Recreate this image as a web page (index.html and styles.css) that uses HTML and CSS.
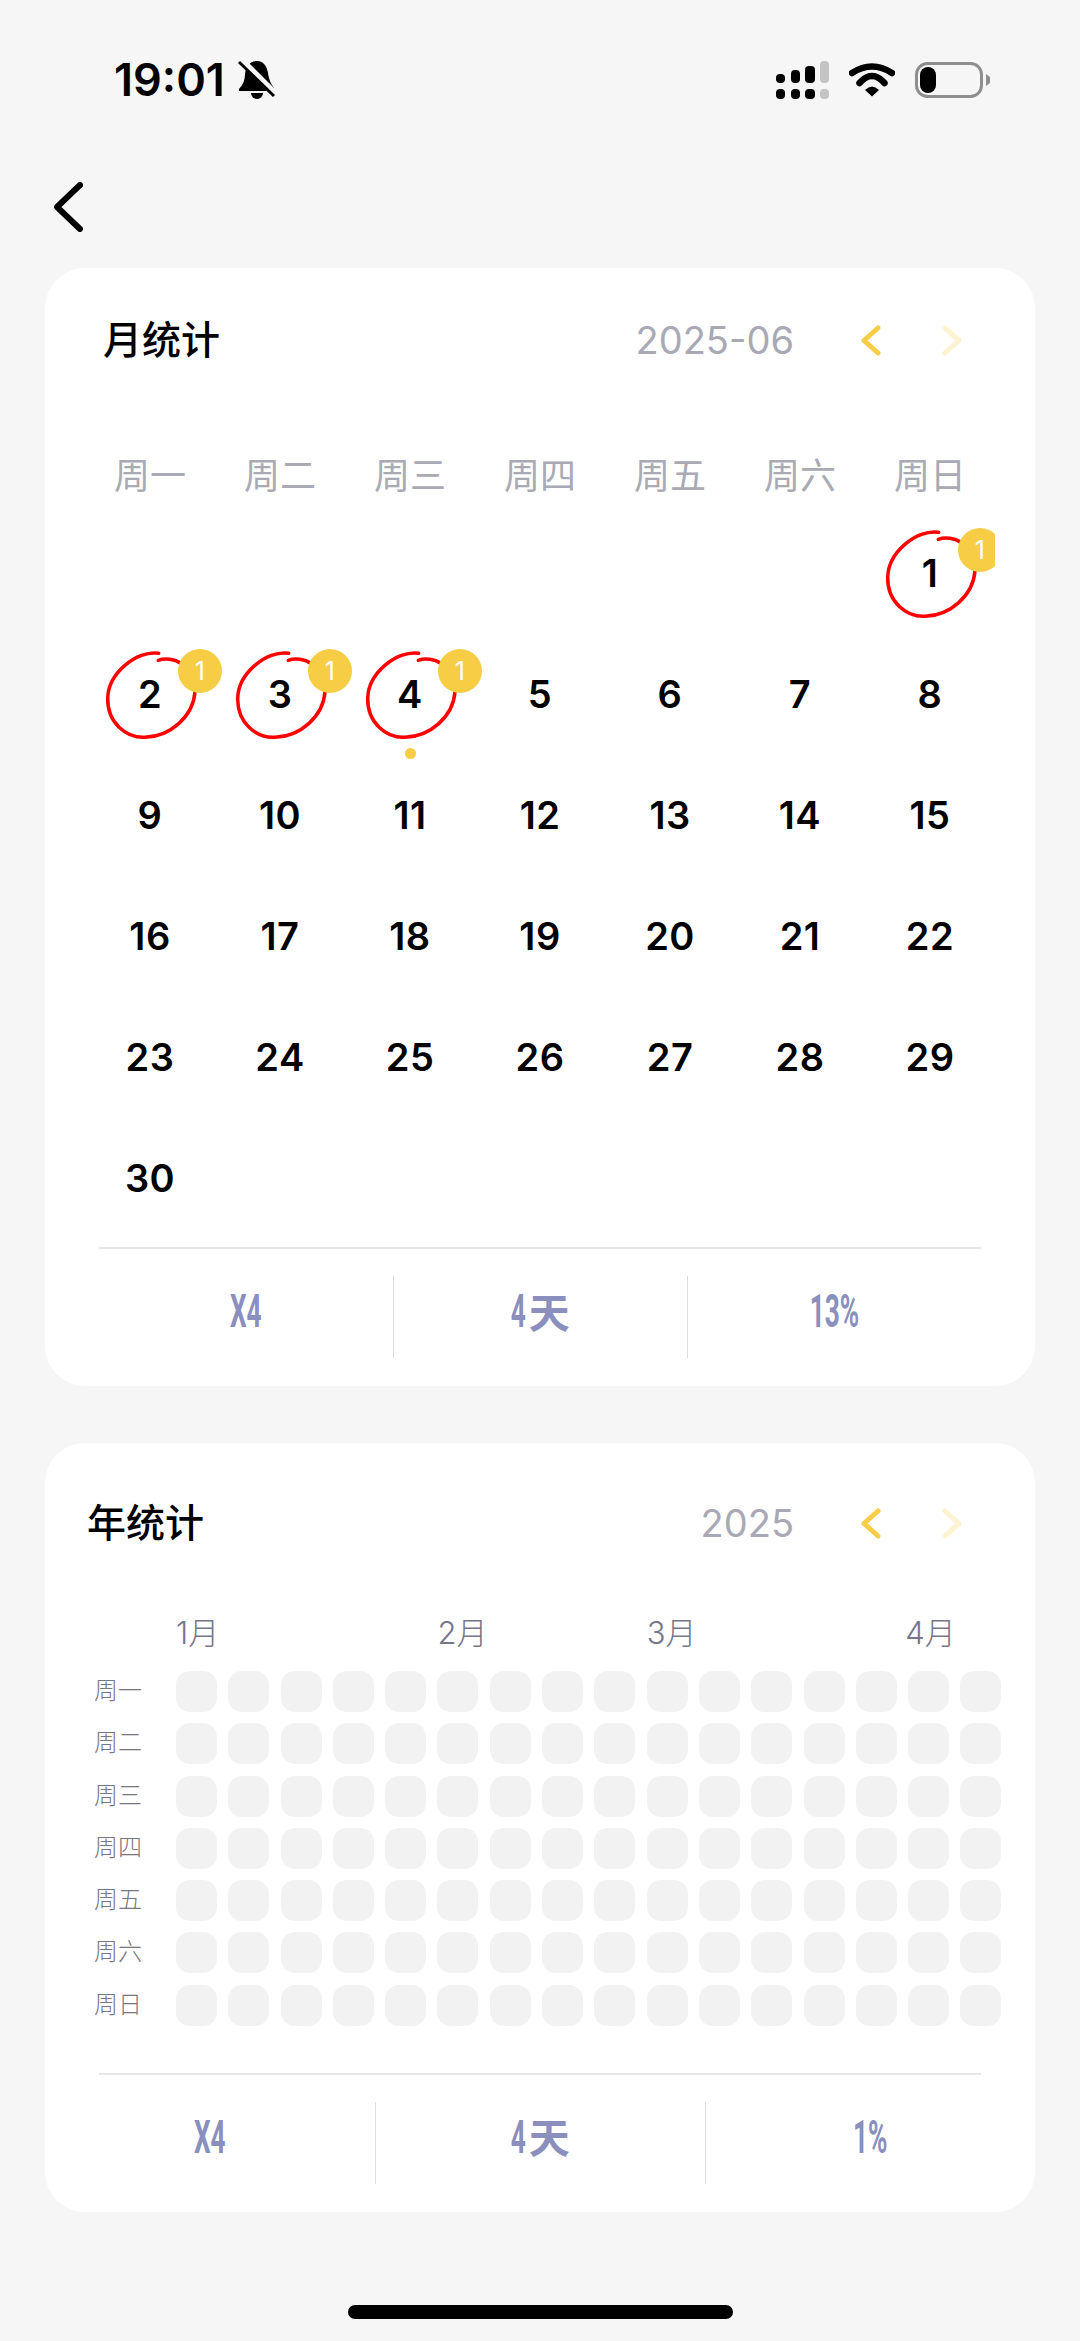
FILE: index.html
```html
<!DOCTYPE html>
<html lang="zh-CN">
<head>
    <meta charset="UTF-8">
    <meta name="viewport" content="width=device-width, initial-scale=1.0">
    <title>统计</title>
    <link rel="stylesheet" href="styles.css">
</head>
<body>
    <div class="status-bar">
        <div class="status-left">
            <span class="status-time">19:01</span>
            <svg class="icon-bell" viewBox="0 0 38 40" width="38" height="40">
                <path d="M19 1C26 1 29 7 30 13C31 20 33 24 36 28V31H1V29C5 25 7 20 7 14C8 7 12 1 19 1Z" fill="#000"/>
                <path d="M13 33A6 6 0 0 0 25 33Z" fill="#000"/>
                <path d="M3 0L38 35" stroke="#f6f6f6" stroke-width="7"/>
                <path d="M1 2L36 36" stroke="#000" stroke-width="3"/>
            </svg>
        </div>
        <div class="status-right">
            <svg viewBox="0 0 53 38" width="53" height="38">
                <rect x="0" y="13" width="9" height="9" rx="4" fill="#000"/>
                <rect x="15" y="9" width="9" height="13" rx="4" fill="#000"/>
                <rect x="29" y="5" width="10" height="17" rx="4" fill="#000"/>
                <rect x="44" y="0" width="9" height="22" rx="4" fill="#c4c4c4"/>
                <rect x="0" y="28" width="9" height="10" rx="4" fill="#000"/>
                <rect x="15" y="28" width="9" height="10" rx="4" fill="#000"/>
                <rect x="29" y="28" width="10" height="10" rx="4" fill="#000"/>
                <rect x="44" y="28" width="9" height="10" rx="4" fill="#c4c4c4"/>
            </svg>
            <svg viewBox="0 0 46 34" width="46" height="34">
                <path d="M3 10Q23 -3 43 10" fill="none" stroke="#000" stroke-width="6.5" stroke-linecap="round"/>
                <path d="M10.5 20Q23 6 35.5 20" fill="none" stroke="#000" stroke-width="6.5" stroke-linecap="round"/>
                <path d="M16 27Q23 20 30 27L23 33.5Z" fill="#000"/>
            </svg>
            <svg class="icon-battery" viewBox="0 0 75 36" width="75" height="36">
                <rect x="1.5" y="1.5" width="65" height="33" rx="11" fill="none" stroke="#8e8e8e" stroke-width="3"/>
                <rect x="5" y="5" width="16" height="26" rx="8" fill="#000"/>
                <path d="M71 12L75 15V21L71 24Z" fill="#8e8e8e"/>
            </svg>
        </div>
    </div>

    <div class="back">
        <svg viewBox="0 0 29 50" width="29" height="50">
            <polyline points="26,3 3,25 26,47" fill="none" stroke="#000" stroke-width="6" stroke-linecap="round" stroke-linejoin="round"/>
        </svg>
    </div>

    <div class="card month-card">
        <div class="card-head">
            <span class="card-title">月统计</span>
            <span class="card-date">2025-06</span>
            <svg class="chev" viewBox="0 0 21 31" width="21" height="31"><polyline points="18,3 4,15.5 18,28"/></svg>
            <svg class="chev chev-next" viewBox="0 0 21 31" width="21" height="31"><polyline points="3,3 17,15.5 3,28"/></svg>
        </div>
        <div class="weekdays">
            <span>周一</span><span>周二</span><span>周三</span><span>周四</span><span>周五</span><span>周六</span><span>周日</span>
        </div>
        <div class="days">
            <div class="day first">
                <svg class="loop" viewBox="0 0 130 121"><path d="M73.7 20.3C51.7 17 23.3 40.3 22.7 65.3C22.3 90.3 41.7 105.3 60 104.3C85 103.7 108.3 83.7 110 58.7"/><path d="M73.3 27.3C80 24.7 90 26 96.7 31"/></svg>
                1<span class="badge">1</span>
            </div>
            <div class="day">
                <svg class="loop" viewBox="0 0 130 121"><path d="M73.7 20.3C51.7 17 23.3 40.3 22.7 65.3C22.3 90.3 41.7 105.3 60 104.3C85 103.7 108.3 83.7 110 58.7"/><path d="M73.3 27.3C80 24.7 90 26 96.7 31"/></svg>
                2<span class="badge">1</span>
            </div>
            <div class="day">
                <svg class="loop" viewBox="0 0 130 121"><path d="M73.7 20.3C51.7 17 23.3 40.3 22.7 65.3C22.3 90.3 41.7 105.3 60 104.3C85 103.7 108.3 83.7 110 58.7"/><path d="M73.3 27.3C80 24.7 90 26 96.7 31"/></svg>
                3<span class="badge">1</span>
            </div>
            <div class="day">
                <svg class="loop" viewBox="0 0 130 121"><path d="M73.7 20.3C51.7 17 23.3 40.3 22.7 65.3C22.3 90.3 41.7 105.3 60 104.3C85 103.7 108.3 83.7 110 58.7"/><path d="M73.3 27.3C80 24.7 90 26 96.7 31"/></svg>
                4<span class="badge">1</span><span class="today-dot"></span>
            </div>
            <div class="day">5</div><div class="day">6</div><div class="day">7</div><div class="day">8</div>
            <div class="day">9</div><div class="day">10</div><div class="day">11</div><div class="day">12</div><div class="day">13</div><div class="day">14</div><div class="day">15</div>
            <div class="day">16</div><div class="day">17</div><div class="day">18</div><div class="day">19</div><div class="day">20</div><div class="day">21</div><div class="day">22</div>
            <div class="day">23</div><div class="day">24</div><div class="day">25</div><div class="day">26</div><div class="day">27</div><div class="day">28</div><div class="day">29</div>
            <div class="day">30</div>
        </div>
        <div class="rule"></div>
        <div class="stats month-stats">
            <div class="stat"><span class="cond">X4</span></div>
            <div class="stat"><span class="cond cond-tight">4</span><span class="stat-cjk">天</span></div>
            <div class="stat"><span class="cond">13%</span></div>
        </div>
    </div>

    <div class="card year-card">
        <div class="card-head">
            <span class="card-title">年统计</span>
            <span class="card-date">2025</span>
            <svg class="chev" viewBox="0 0 21 31" width="21" height="31"><polyline points="18,3 4,15.5 18,28"/></svg>
            <svg class="chev chev-next" viewBox="0 0 21 31" width="21" height="31"><polyline points="3,3 17,15.5 3,28"/></svg>
        </div>
        <div class="heat-months">
            <span class="m-jan">1月</span><span class="m-feb">2月</span><span class="m-mar">3月</span><span class="m-apr">4月</span>
        </div>
        <div class="heat">
            <span class="heat-label">周一</span><i></i><i></i><i></i><i></i><i></i><i></i><i></i><i></i><i></i><i></i><i></i><i></i><i></i><i></i><i></i><i></i>
            <span class="heat-label">周二</span><i></i><i></i><i></i><i></i><i></i><i></i><i></i><i></i><i></i><i></i><i></i><i></i><i></i><i></i><i></i><i></i>
            <span class="heat-label">周三</span><i></i><i></i><i></i><i></i><i></i><i></i><i></i><i></i><i></i><i></i><i></i><i></i><i></i><i></i><i></i><i></i>
            <span class="heat-label">周四</span><i></i><i></i><i></i><i></i><i></i><i></i><i></i><i></i><i></i><i></i><i></i><i></i><i></i><i></i><i></i><i></i>
            <span class="heat-label">周五</span><i></i><i></i><i></i><i></i><i></i><i></i><i></i><i></i><i></i><i></i><i></i><i></i><i></i><i></i><i></i><i></i>
            <span class="heat-label">周六</span><i></i><i></i><i></i><i></i><i></i><i></i><i></i><i></i><i></i><i></i><i></i><i></i><i></i><i></i><i></i><i></i>
            <span class="heat-label">周日</span><i></i><i></i><i></i><i></i><i></i><i></i><i></i><i></i><i></i><i></i><i></i><i></i><i></i><i></i><i></i><i></i>
        </div>
        <div class="rule year-rule"></div>
        <div class="stats year-stats">
            <div class="stat"><span class="cond">X4</span></div>
            <div class="stat"><span class="cond cond-tight">4</span><span class="stat-cjk">天</span></div>
            <div class="stat"><span class="cond">1%</span></div>
        </div>
    </div>

    <div class="home-bar"></div>
</body>
</html>
```

FILE: styles.css
```css
html, body {
    margin: 0;
    padding: 0;
}
body {
    width: 1080px;
    height: 2341px;
    overflow: hidden;
    position: relative;
    background: #f6f6f6;
    font-family: Inter, "Noto Sans CJK SC", sans-serif;
    color: #000;
}

/* status bar */
.status-bar {
    display: flex;
    justify-content: space-between;
    align-items: center;
    height: 44px;
    padding: 58px 90px 0 114px;
}
.status-left {
    display: flex;
    align-items: center;
    gap: 13px;
}
.status-time {
    font-size: 45px;
    font-weight: 600;
    line-height: 44px;
}
.status-right {
    display: flex;
    align-items: center;
    gap: 20px;
}
.status-right svg, .icon-bell {
    display: block;
}

.back {
    height: 50px;
    padding: 80px 0 36px 54px;
}
.back svg {
    display: block;
}

/* cards */
.card {
    margin: 0 45px;
    background: #fff;
    border-radius: 40px;
    padding-bottom: 28px;
}
.year-card {
    margin-top: 57px;
}
.card-head {
    display: flex;
    align-items: center;
    height: 50px;
    padding-right: 72px;
}
.month-card .card-head {
    padding-top: 47px;
    padding-left: 58px;
}
.year-card .card-head {
    padding-top: 55px;
    padding-left: 42px;
}
.card-title {
    padding-bottom: 6px;
    font-size: 39px;
    font-weight: 500;
}
.card-date {
    margin-left: auto;
    margin-right: 66px;
    padding-bottom: 1px;
    font-size: 38px;
    color: #a8a9b5;
}
.chev {
    display: block;
    fill: none;
    stroke: #f7cd46;
    stroke-width: 5;
    stroke-linecap: round;
    stroke-linejoin: round;
}
.chev-next {
    margin-left: 61px;
    stroke: #fdf3d0;
}

/* month calendar */
.weekdays {
    display: grid;
    grid-template-columns: repeat(7, 130px);
    margin: 75px 40px 0;
    height: 72px;
    align-items: center;
    justify-items: center;
    font-size: 36px;
    color: #a9aab3;
}
.weekdays span {
    padding-bottom: 6px;
}
.days {
    display: grid;
    grid-template-columns: repeat(7, 130px);
    grid-auto-rows: 121px;
    margin: 0 40px;
    overflow: hidden;
}
.day {
    position: relative;
    display: flex;
    align-items: center;
    justify-content: center;
    font-size: 38px;
    font-weight: 600;
    letter-spacing: 0.5px;
}
.first {
    grid-column-start: 7;
}
.loop {
    position: absolute;
    top: 0;
    left: 0;
    width: 130px;
    height: 121px;
    fill: none;
    stroke: #f00;
    stroke-width: 3.5;
    stroke-linecap: round;
}
.badge {
    position: absolute;
    top: 16px;
    left: 93px;
    width: 44px;
    height: 44px;
    border-radius: 50%;
    background: #f6cd45;
    color: #fff;
    font-size: 25px;
    font-weight: 400;
    line-height: 44px;
    text-align: center;
}
.today-dot {
    position: absolute;
    top: 115px;
    left: 60px;
    width: 11px;
    height: 11px;
    border-radius: 50%;
    background: #f6cd45;
}

/* summary row */
.rule {
    height: 2px;
    margin: 9px 54px 0;
    background: #e6e6e6;
}
.stats {
    display: grid;
    grid-template-columns: repeat(3, 1fr);
    margin-top: 27px;
}
.month-stats {
    margin-left: 54px;
    margin-right: 54px;
}
.stat {
    display: flex;
    align-items: center;
    justify-content: center;
    height: 70px;
    padding-bottom: 12px;
    color: #8a8fbd;
}
.stat + .stat {
    border-left: 1px solid #dcdcdc;
}
.cond {
    display: inline-block;
    font-family: Roboto, sans-serif;
    font-size: 46px;
    font-weight: 700;
    transform: scaleX(0.57);
}
.cond-tight {
    margin: 0 -3px 0 -6px;
}
.stat-cjk {
    padding-bottom: 3px;
    font-size: 41px;
    font-weight: 700;
}

/* year heat map */
.heat-months, .heat {
    display: grid;
    grid-template-columns: 70.7px repeat(16, 41px);
    column-gap: 11.3px;
    padding-left: 49px;
}
.heat-months {
    margin-top: 60px;
    height: 40px;
    align-items: center;
    font-size: 31px;
    font-weight: 300;
    color: #75768a;
    white-space: nowrap;
}
.heat-months span {
    padding-bottom: 8px;
}
.m-jan { grid-column: 2 / span 3; }
.m-feb { grid-column: 7 / span 3; }
.m-mar { grid-column: 11 / span 3; }
.m-apr { grid-column: 16 / span 2; margin-left: -3px; }
.heat {
    grid-auto-rows: 41px;
    row-gap: 11.3px;
    margin-top: 23px;
    align-items: center;
}
.heat i {
    display: block;
    height: 41px;
    border-radius: 14px;
    background: #f2f2f2;
}
.heat-label {
    padding-bottom: 6px;
    font-size: 24px;
    font-weight: 300;
    color: #77777f;
    white-space: nowrap;
}
.year-rule {
    margin-top: 47px;
}

.home-bar {
    position: absolute;
    left: 348px;
    bottom: 22px;
    width: 385px;
    height: 14px;
    border-radius: 7px;
    background: #000;
}
```
